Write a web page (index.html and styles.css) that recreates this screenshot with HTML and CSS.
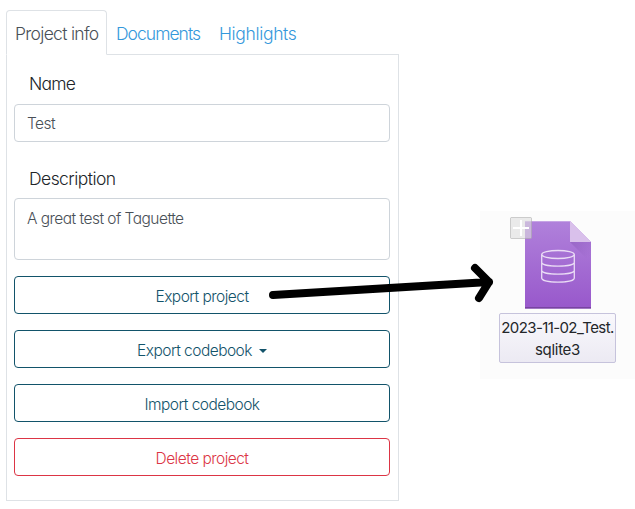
FILE: index.html
```html
<!DOCTYPE html>
<html lang="en">
<head>
<meta charset="utf-8">
<title>Project info</title>
<link rel="stylesheet" href="styles.css">
</head>
<body>
<main class="layout">
  <section class="project">
    <nav class="tabs">
      <a class="tab active"><span class="t-info">Project info</span></a>
      <a class="tab"><span class="t-docs">Documents</span></a>
      <a class="tab"><span class="t-high">Highlights</span></a>
    </nav>
    <div class="panel">
      <div class="label name">Name</div>
      <div class="field">Test</div>
      <div class="label description">Description</div>
      <div class="field area">A great test of Taguette</div>
      <div class="button">Export project</div>
      <div class="button">Export codebook<i class="caret"></i></div>
      <div class="button">Import codebook</div>
      <div class="button danger">Delete project</div>
    </div>
  </section>
  <aside class="desktop">
    <svg class="file" width="84" height="94" viewBox="0 0 84 94">
      <defs><linearGradient id="g" x2="0" y2="1"><stop stop-color="#b081db"/><stop offset="1" stop-color="#9858cb"/></linearGradient>
      <linearGradient id="s" x2="1" y2="1"><stop stop-color="#7040a0" stop-opacity=".3"/><stop offset=".8" stop-color="#7040a0" stop-opacity="0"/></linearGradient></defs>
      <path d="M15 5h45l21 21v66.500H15z" fill="url(#g)"/>
      <path d="M15 5h45v1H15z" fill="#c6a4e5"/>
      <path d="M15 91h66v1.500H15z" fill="#7844a1"/>
      <path d="M60 26h21v21z" fill="url(#s)"/>
      <path d="M60 5l21 21H60z" fill="#d9c0eb"/>
      <g fill="none" stroke="#eadcf5" stroke-width="1.300"><ellipse cx="48" cy="38.500" rx="16.300" ry="4"/><path d="M31.700 38.500v23.500c0 5.500 32.600 5.500 32.600 0V38.500M31.700 46.200c0 5.300 32.600 5.300 32.600 0M31.700 54.200c0 5.300 32.600 5.300 32.600 0"/></g>
      <rect x=".5" y="1.500" width="21" height="21" rx="1" fill="#ddd" fill-opacity=".6" stroke="#aaa" stroke-opacity=".55"/>
      <path d="M11 4v16M3 12h16" stroke="#fff" stroke-width="2"/>
    </svg>
    <div class="filename">2023-11-02_Test.<br><span class="extension">sqlite3</span></div>
  </aside>
</main>
<svg class="arrow" width="635" height="509" viewBox="0 0 635 509"><path d="M273 295L489 282M475 268L489 282L479 298" fill="none" stroke="#000" stroke-width="8" stroke-linecap="round" stroke-linejoin="round"/></svg>
</body>
</html>
```
FILE: styles.css
```css
* { box-sizing: border-box; }
body { margin: 0; background: #fff; overflow: hidden; font: 300 15.5px/24px Inter, "Liberation Sans", sans-serif; font-feature-settings: "cv11"; letter-spacing: -.53px; color: #495057; }
.layout { display: flex; align-items: flex-start; height: 509px; padding: 10px 0 0 6px; }
.project { width: 393px; }
.tabs { display: flex; height: 45px; border-bottom: 1px solid #dee2e6; font-size: 17.5px; }
.tab { height: 44px; padding: 11px 8px 0; border: 1px solid transparent; color: #3498db; white-space: nowrap; }
.tab:nth-child(1) { width: 101px; }
.tab:nth-child(2) { width: 103px; }
.t-info { letter-spacing: -.7px; }
.t-docs { letter-spacing: -.98px; }
.t-high { letter-spacing: -.35px; }
.active { height: 45px; color: #495057; background: #fff; border-color: #dee2e6 #dee2e6 #fff; border-radius: 4px 4px 0 0; }
.panel { height: 446px; padding: 0 8px 0 7px; border: 1px solid #dee2e6; border-top: 0; }
.label { height: 49px; padding: 17px 0 0 15px; font-size: 17.5px; color: #212529; letter-spacing: -.55px; }
.name { letter-spacing: -.8px; }
.description { height: 56px; padding-top: 25px; }
.field { height: 38px; padding: 7px 12px; border: 1px solid #ced4da; border-radius: 4px; }
.area { height: 62px; padding-top: 8px; }
.button { height: 38px; margin-top: 16px; display: flex; align-items: center; justify-content: center; padding-top: 4px; border: 1px solid #12536a; border-radius: 4px; color: #12536a; }
.danger { border-color: #dc3545; color: #dc3545; }
.caret { margin-left: 7px; border: 4.500px solid transparent; border-top-color: currentColor; border-bottom: 0; }
.desktop { width: 155px; height: 168px; margin: 201px 0 0 81px; padding: 5px 19px 0; background: #fcfcfc; }
.file { display: block; margin-left: 11px; }
.filename { width: 117px; height: 50px; margin-top: 3px; padding-top: 3px; border: 1px solid #c6c3dc; border-radius: 2px; background: linear-gradient(#f9f8fc, #eceaf3); color: #232629; text-align: center; white-space: nowrap; font: 400 15px/22px Inter, sans-serif; letter-spacing: -.6px; }
.extension { letter-spacing: -.3px; }
.arrow { position: absolute; left: 0; top: 0; pointer-events: none; }
```
